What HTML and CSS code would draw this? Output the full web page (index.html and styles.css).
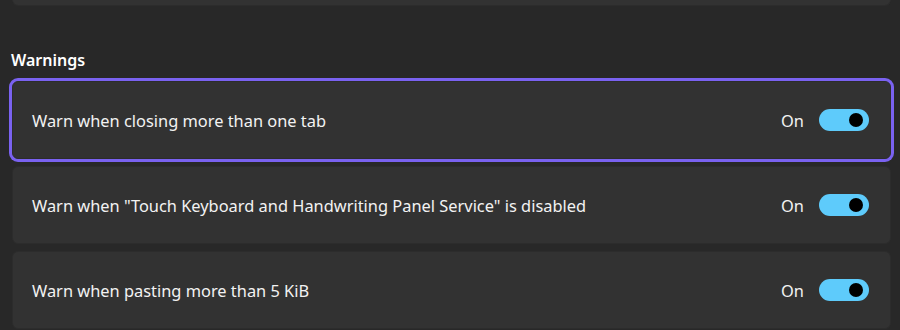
FILE: index.html
```html
<!DOCTYPE html>
<html lang="en">
<head>
<meta charset="utf-8">
<link rel="stylesheet" href="styles.css">
</head>
<body>
<div class="page">
  <div class="card card-top"></div>
  <h2 class="section-title">Warnings</h2>
  <div class="list">
    <div class="card row focused">
      <span class="label">Warn when closing more than one tab</span>
      <div class="control"><span class="state">On</span><span class="toggle"><span class="knob"></span></span></div>
    </div>
    <div class="card row">
      <span class="label">Warn when "Touch Keyboard and Handwriting Panel Service" is disabled</span>
      <div class="control"><span class="state">On</span><span class="toggle"><span class="knob"></span></span></div>
    </div>
    <div class="card row">
      <span class="label">Warn when pasting more than 5 KiB</span>
      <div class="control"><span class="state">On</span><span class="toggle"><span class="knob"></span></span></div>
    </div>
  </div>
</div>
</body>
</html>
```
FILE: styles.css
```css
html, body {
  margin: 0;
  padding: 0;
  background: #282828;
  overflow: hidden;
}
body {
  width: 900px;
  height: 330px;
  font-family: "Noto Sans", "Open Sans", sans-serif;
  color: #ffffff;
}
.page {
  padding: 0 9px 0 12px;
}
.card {
  background: #323232;
  border: 1px solid #2c2c2c;
  border-radius: 6px;
  box-sizing: border-box;
}
.card-top {
  height: 6px;
  border-top: none;
  border-top-left-radius: 0;
  border-top-right-radius: 0;
}
.section-title {
  margin: 42px 0 0 -1px;
  height: 33px;
  font-size: 16px;
  font-weight: 600;
  line-height: 24px;
}
.list {
  display: flex;
  flex-direction: column;
  gap: 7px;
}
.row {
  height: 78px;
  display: flex;
  align-items: center;
  justify-content: space-between;
  padding: 0 21px 0 19px;
}
.focused {
  box-shadow: 0 0 0 1px #7a62f0, 0 0 0 3px #7a62f0;
}
.label {
  font-size: 16.4px;
  color: #f2f2f2;
}
.control {
  display: flex;
  align-items: center;
  gap: 15px;
}
.state {
  font-size: 16.4px;
  color: #f2f2f2;
}
.toggle {
  width: 50px;
  height: 22px;
  border-radius: 11px;
  background: #5ecbfb;
  display: flex;
  align-items: center;
  justify-content: flex-end;
  padding-right: 6px;
  box-sizing: border-box;
}
.knob {
  width: 14px;
  height: 14px;
  border-radius: 50%;
  background: #000000;
}
```
